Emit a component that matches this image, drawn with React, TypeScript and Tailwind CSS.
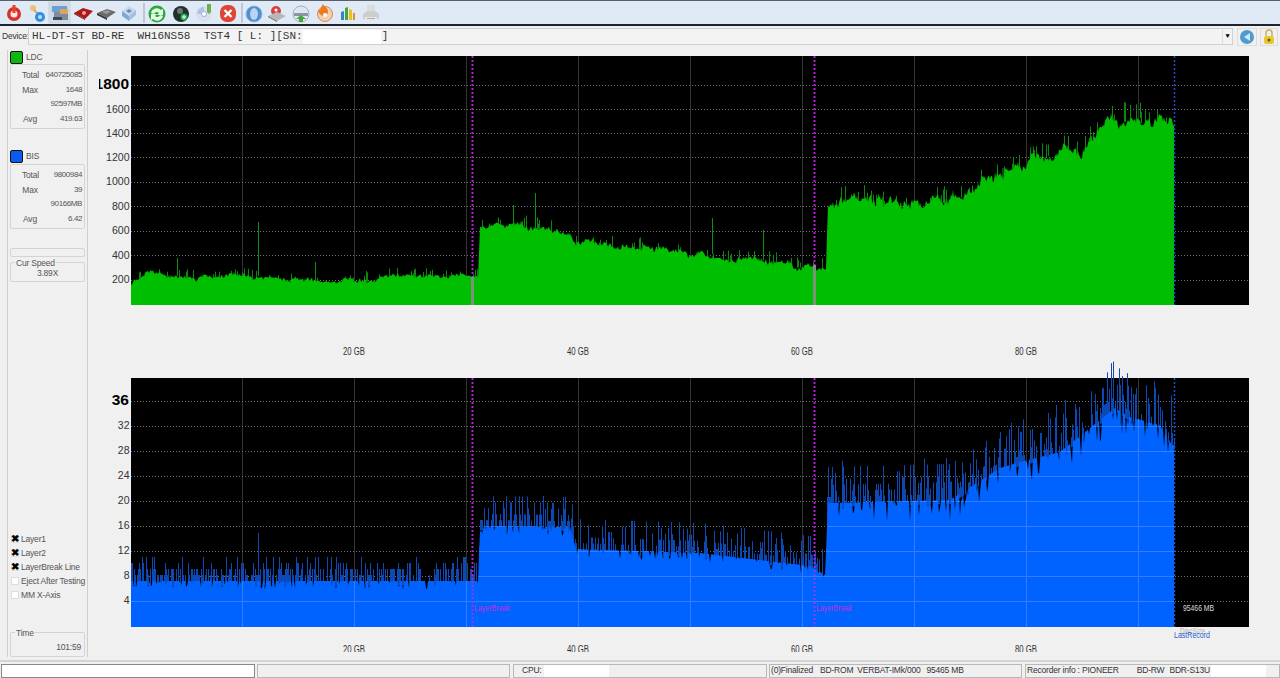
import React from "react";

function rng(seed: number) {
  let s = seed;
  return () => {
    s = (s * 1664525 + 1013904223) % 4294967296;
    return s / 4294967296;
  };
}
function interp(pts: number[][], x: number) {
  for (let i = 1; i < pts.length; i++) {
    if (x <= pts[i][0]) {
      const [a, b] = pts[i - 1];
      const [c, d] = pts[i];
      return b + ((d - b) * (x - a)) / (c - a || 1);
    }
  }
  return pts[pts.length - 1][1];
}

const LDC = [[131,284],[150,272],[170,277],[250,276],[300,280],[340,282],[400,275],[470,278],[478,277],[480,226],[530,224],[570,236],[575,244],[650,249],[700,256],[750,260],[812,266],[826,270],[828,206],[850,197],[900,207],[950,199],[1000,178],[1020,167],[1060,147],[1080,155],[1100,127],[1110,118],[1170,122],[1174,128]];
const BIS = [[131,581],[470,581],[478,581],[480,526],[570,527],[576,549],[700,553],[810,566],[825,575],[828,503],[950,500],[1000,468],[1020,462],[1060,452],[1085,432],[1100,420],[1115,408],[1130,417],[1160,425],[1172,445]];

function greenPath() {
  const r = rng(7);
  let low = 0;
  let d = "M131 305";
  for (let x = 131; x <= 1174; x++) {
    const amp = x < 478 ? 3 : x < 828 ? 4 : 7;
    low = 0.85 * low + (r() - 0.5) * amp * 0.9;
    d += `L${x} ${(interp(LDC, x) + low + (r() - 0.5) * amp).toFixed(1)}`;
  }
  return d + "L1174 305Z";
}
function greenSpikes() {
  const r = rng(3);
  let d = "";
  for (let x = 131; x <= 1174; x += 1) {
    if (r() < 0.16) {
      const y = interp(LDC, x);
      const len = (x < 478 ? 6 : x < 828 ? 9 : 15) * r();
      d += `M${x + 0.5} ${y + 3}V${(y - 2 - len).toFixed(1)}`;
    }
  }
  return d;
}
function bluePath() {
  const r = rng(11);
  let d = "M131 627";
  for (let x = 131; x <= 1174; x++) {
    const base = interp(BIS, x);
    const big = x >= 828 ? 22 : 9;
    const drop = r() < 0.22 ? r() * big : 0;
    d += `L${x} ${(base + drop).toFixed(1)}`;
  }
  return d + "L1174 627Z";
}
function blueSpikes() {
  const r = rng(5);
  let d = "";
  for (let x = 131; x <= 1174; x++) {
    if (r() < 0.58) {
      const y = interp(BIS, x);
      const maxLen = x < 478 ? 18 : x < 828 ? 26 : x < 1000 ? 34 : 40;
      const k = r();
      const len = Math.ceil((k * k * maxLen + 4) / 6) * 6;
      d += `M${x + 0.5} ${y + 4}V${(y - len).toFixed(1)}`;
    }
  }
  return d;
}

const FONT = "'Liberation Sans', sans-serif";

function Chart({ id, top, labels, series, fill, breakEnd, breakLow }: {
  id: string;
  top: number;
  labels: [string, number, number, boolean][];
  series: React.ReactNode;
  fill?: string;
  breakEnd: [number, number];
  breakLow?: string;
}) {
  const height = 249;
  const b = top + height;
  const vs = [242, 354, 466, 578, 690, 802, 914, 1026, 1138];
  return (
    <g fontFamily={FONT}>
      <defs>
        <clipPath id={id}><rect x={99} y={top - 4} width={60} height={40} /></clipPath>
        {fill && <clipPath id={`${id}f`}><path d={fill} /></clipPath>}
      </defs>
      <rect x={131} y={top} width={1118} height={height} fill="#000" />
      {vs.map((x) => (
        <path key={x} d={`M${x + 0.5} ${top}V${b}`} stroke="#333" strokeWidth={1} />
      ))}
      {labels.map(([t, y]) => (
        <path key={t} d={`M131 ${y + 0.5}H1249`} stroke="#6e6e6e" strokeWidth={1} strokeDasharray="1 2" />
      ))}
      {series}
      {fill && (
        <g clipPath={`url(#${id}f)`}>
          {vs.map((x) => (
            <path key={x} d={`M${x + 0.5} ${top}V${b}`} stroke="#2f7fff" strokeWidth={1} />
          ))}
          {labels.map(([t, y]) => (
            <path key={t} d={`M131 ${y + 0.5}H1174`} stroke="#2f7fff" strokeWidth={1} />
          ))}
        </g>
      )}
      {labels.map(([t, y, ty, bold]) =>
        bold ? (
          <text key={t} x={129} y={ty + 5} textAnchor="end" fontSize={15.5} fontWeight={700} fill="#000" clipPath={`url(#${id})`}>{t}</text>
        ) : (
          <text key={t} x={129.5} y={ty + 4} textAnchor="end" fontSize={11.5} textLength={t.length * 5.85} lengthAdjust="spacingAndGlyphs" fill="#333">{t}</text>
        )
      )}
      {[472, 814].map((x, i) => (
        <React.Fragment key={x}>
          <path d={`M${x + 0.5} ${top}V${breakEnd[i]}`} stroke="#b41fd0" strokeWidth={2} strokeDasharray="2 2" />
          <path d={`M${x + 0.5} ${breakEnd[i]}V${b}`} stroke={breakLow || "#7d917d"} strokeWidth={breakLow ? 2 : 3} strokeDasharray={breakLow ? "2 2" : undefined} />
        </React.Fragment>
      ))}
      <path d={`M1174.5 ${top}V${b}`} stroke="#1850d8" strokeWidth={1.5} strokeDasharray="2 2" />
    </g>
  );
}

function AxisLabels({ y }: { y: number }) {
  return (
    <g fontFamily={FONT} fontSize={10} fill="#333">
      {[["20 GB", 354], ["40 GB", 578], ["60 GB", 802], ["80 GB", 1026]].map(([t, x]) => (
        <text key={t as string} x={x as number} y={y} textAnchor="middle" textLength={22} lengthAdjust="spacingAndGlyphs">{t}</text>
      ))}
    </g>
  );
}

function Charts() {
  const green = greenPath();
  const blue = bluePath();
  return (
    <svg className="block" width={1192} height={610} viewBox="88 50 1192 610">
      <defs>
        <clipPath id="axisClip"><rect x={88} y={636} width={1192} height={16} /></clipPath>
      </defs>
      <Chart
        id="ldc"
        top={56}
        breakEnd={[277, 265]}
        labels={[["1800", 85, 84, true], ["1600", 109, 108.5, false], ["1400", 133, 133, false], ["1200", 157, 157, false], ["1000", 182, 181, false], ["800", 206, 206, false], ["600", 231, 230, false], ["400", 255, 255, false], ["200", 280, 279, false]]}
        series={
          <g>
            <path d={greenSpikes()} stroke="#0a8a0a" strokeWidth={1} />
            <path d={green} fill="#00bf00" />
            <path d="M258.5 276V222M177.5 276V258M315.5 280V262M535.5 226V193M712.5 254V218M763.5 260V230M513.5 226V205M1112.5 120V106M1140.5 118V103M1068.5 150V136M1003 180V168" stroke="#0f8f0f" strokeWidth={1} />
          </g>
        }
      />
      <AxisLabels y={355} />
      <Chart
        id="bis"
        top={378}
        fill={blue}
        breakEnd={[581, 566]}
        breakLow="#8a3ff0"
        labels={[["36", 401, 400, true], ["32", 426, 424.5, false], ["28", 451, 450, false], ["24", 476, 475, false], ["20", 501, 500, false], ["16", 526, 525, false], ["12", 551, 550, false], ["8", 576, 575, false], ["4", 601, 600, false]]}
        series={
          <g>
            <path d={blueSpikes()} stroke="#0c49b4" strokeWidth={1} />
            <path d={blue} fill="#0062ff" />
            <path d="M258.5 575V533M543.5 527V496M1120.5 425V385M1066.5 455V418M1136.5 420V388" stroke="#0c49b4" strokeWidth={1} />
          </g>
        }
      />
      <g fontFamily={FONT} fontSize={9}>
        <text x={474} y={611} fill="#c030e0" textLength={36} lengthAdjust="spacingAndGlyphs">LayerBreak</text>
        <text x={816} y={611} fill="#c030e0" textLength={36} lengthAdjust="spacingAndGlyphs">LayerBreak</text>
        <text x={1183} y={611} fill="#ddd" textLength={31} lengthAdjust="spacingAndGlyphs">95466 MB</text>
        <text x={1180} y={634} fill="#b5b5b5" textLength={25} lengthAdjust="spacingAndGlyphs">DiscSize</text>
        <text x={1174} y={638} fill="#2a5fd0" textLength={36} lengthAdjust="spacingAndGlyphs">LastRecord</text>
      </g>
      <g clipPath="url(#axisClip)">
        <AxisLabels y={653} />
      </g>
    </svg>
  );
}

function Disc({ c }: { c: string }) {
  return <span className={`h-[13px] w-[13px] rounded-[2px] border border-[#111] ${c}`} />;
}

function StatBox({ rows }: { rows: [string, string][] }) {
  return (
    <div className="h-[65px] w-[75px] rounded-[2px] border border-[#d4d4d4] pb-[3px] pl-[11px] pr-[2px] pt-[3px]">
      {rows.map(([l, v], i) => (
        <div key={i} className="flex h-[14.6px] items-center justify-between">
          <span className="w-[16px] text-center">{l}</span>
          <span className="text-[8px] tracking-[-0.4px]">{v}</span>
        </div>
      ))}
    </div>
  );
}

function Check({ on, label }: { on: boolean; label: string }) {
  return (
    <div className="flex h-[14px] items-center gap-[2px] whitespace-nowrap pl-[1px]">
      <span className="flex h-[8px] w-[8px] items-center justify-center border border-[#dcdcdc] bg-white text-[10px] font-bold leading-none text-black">
        {on ? "✖" : ""}
      </span>
      <span>{label}</span>
    </div>
  );
}

const icons: React.ReactNode[] = [
  <g key="p"><circle cx="10" cy="11" r="7" fill="#d9302a" /><circle cx="10" cy="11" r="3.5" fill="#fbe8e0" /><rect x="8.5" y="2" width="3" height="8" fill="#e8402a" /></g>,
  <g key="k"><circle cx="6" cy="5" r="3" fill="#e9c07a" /><path d="M7 7l5 5" stroke="#d8a850" strokeWidth="2" /><circle cx="13" cy="14" r="5" fill="#2f8fe0" /><circle cx="13" cy="14" r="2" fill="#bfe0f8" /></g>,
  <g key="d"><rect x="2" y="3" width="15" height="6" fill="#6f9fd0" /><rect x="4" y="9" width="14" height="8" fill="#7c8c9c" /><rect x="10" y="6" width="8" height="5" fill="#d8a860" /><rect x="3" y="14" width="9" height="3" fill="#3a4a5a" /></g>,
  <g key="r"><path d="M1 10l9-5 10 3-8 8z" fill="#b01818" /><path d="M1 10l11 6v1L1 11z" fill="#701010" /><circle cx="11" cy="10" r="2" fill="#e8a0a0" /></g>,
  <g key="b"><path d="M1 10l10-4 9 3-9 6z" fill="#6a6a6a" /><path d="M1 10l10 5v2L1 12z" fill="#333" /><path d="M6 9l5-2 4 2-5 2z" fill="#9a9a9a" /></g>,
  <g key="s"><path d="M3 8l7-5 7 4-7 6z" fill="#c8d8ea" /><path d="M3 8l7 5v5l-7-5z" fill="#7fa8d0" /><path d="M17 7l-7 6v5l7-6z" fill="#a4c0dc" /><path d="M7 8l3-2 3 2-3 2z" fill="#5f90c8" /></g>,
  <g key="g"><circle cx="10" cy="11" r="8.5" fill="#2aa83a" /><path d="M4 10a6 6 0 0 1 10-3l2-1v6h-6l2-2a3 3 0 0 0-5 1zM16 13a6 6 0 0 1-10 3l-2 1v-6h6l-2 2a3 3 0 0 0 5-1z" fill="#e6ffe6" /></g>,
  <g key="bl"><circle cx="10" cy="11" r="8" fill="#20302a" /><circle cx="9" cy="8" r="3" fill="#6a7a72" /><circle cx="13" cy="14" r="3.5" fill="#28b050" /><path d="M11 14h4M13 12v4" stroke="#fff" strokeWidth="1" /></g>,
  <g key="c"><circle cx="10" cy="11" r="8" fill="#d8dff0" /><circle cx="10" cy="11" r="2.5" fill="#fff" stroke="#a0b0d0" /><path d="M3 11a7 7 0 0 1 7-7v4a3 3 0 0 0-3 3z" fill="#b0c0e8" /><path d="M13 1h4v8l-2 2-2-2z" fill="#6cb04a" /></g>,
  <g key="x"><rect x="2" y="2" width="16" height="17" rx="7" fill="#e04434" /><path d="M6.5 7l7 7M13.5 7l-7 7" stroke="#fff" strokeWidth="2.4" /></g>,
  <g key="o"><circle cx="10" cy="11" r="8" fill="#4f8fd0" /><ellipse cx="10" cy="11" rx="4" ry="6" fill="#b8d4f0" /><circle cx="10" cy="11" r="8" fill="none" stroke="#8fb8e0" /></g>,
  <g key="u"><ellipse cx="9" cy="8" rx="5" ry="5" fill="#d84040" /><circle cx="9" cy="7" r="1.5" fill="#fff" /><path d="M1 13l9-4 9 4-9 5z" fill="#b8b8b8" /><path d="M1 13l9 5v1l-9-5z" fill="#666" /></g>,
  <g key="dn"><circle cx="10" cy="11" r="8" fill="#dfe6f0" stroke="#a0b0c4" /><rect x="3" y="10" width="14" height="3" fill="#8a96a4" /><path d="M10 12l5 4h-3v3H8v-3H5z" fill="#3fa83f" /></g>,
  <g key="f"><circle cx="11" cy="11" r="7.5" fill="#f0d0b0" stroke="#d88a50" /><path d="M4 8c3-1 3-4 5-7 1 3 5 3 5 8-1 5-7 6-10-1z" fill="#ee7a20" /><circle cx="11" cy="12" r="2" fill="#fff" /></g>,
  <g key="ch"><path d="M4 9l3-1v9H4z" fill="#3a7fd0" /><path d="M8 5l3-1v13H8z" fill="#3fa83f" /><path d="M12 6l3 1v10h-3z" fill="#e8c020" /><rect x="16" y="10" width="2" height="7" fill="#e09020" /></g>,
  <g key="pr" opacity="0.65"><rect x="6" y="2" width="8" height="6" fill="#d8d8d0" /><path d="M2 11l4-3h8l4 3v5H2z" fill="#c0c0b8" /><rect x="4" y="14" width="12" height="4" fill="#e8e8e0" /><rect x="6" y="15" width="8" height="1" fill="#909088" /></g>,
];

function Toolbar() {
  const groups = [icons.slice(0, 6), icons.slice(6, 10), icons.slice(10)];
  const gapW = ["w-[23px]", "w-[23.5px]", "w-[23.3px]"];
  const sep = ["", "ml-[2.5px] mr-[1px]", "ml-[1px]"];
  return (
    <div className="flex h-[24px] items-center border-t border-[#55606c] bg-[#e0e9f6] pl-[2px]">
      {groups.map((g, i) => (
        <React.Fragment key={i}>
          {i > 0 && <span className={`h-[20px] w-[2px] bg-[#bcc8d6] ${sep[i]}`} />}
          {g.map((ic, j) => (
            <span
              key={j}
              className={`flex h-[23px] ${gapW[i]} items-center justify-center ${i === 0 && j === 2 ? "border border-[#d6dee8] bg-[#cfd9e5]" : ""}`}
            >
              <svg width="20" height="20" viewBox="0 0 20 20">{ic}</svg>
            </span>
          ))}
        </React.Fragment>
      ))}
    </div>
  );
}

function DeviceBar() {
  return (
    <div className="flex h-[24px] items-start bg-[#f0f0f0] pl-[2px] pr-[2px] pt-[2px] text-[8.5px] tracking-[-0.2px] text-[#333]">
      <span className="flex h-[17px] w-[26px] items-center whitespace-nowrap">Device:</span>
      <div className="flex h-[17px] flex-1 items-center border border-[#d0d0d0] bg-[#f3f3f3] pl-[3px] font-['Liberation_Mono',monospace] text-[11px] leading-none tracking-normal text-[#333]">
        <span className="whitespace-pre">HL-DT-ST BD-RE  WH16NS58  TST4 [ L: ][SN:</span>
        <span className="h-[14px] w-[78px] bg-white" />
        <span className="pl-[1px]">]</span>
        <span className="ml-auto flex h-[15px] w-[10px] items-center justify-center border-l border-[#ddd] text-[7px] text-black">▼</span>
      </div>
      <span className="ml-[4px] flex h-[18px] w-[20px] items-center justify-center border border-[#ddd]">
        <svg width="16" height="16" viewBox="0 0 16 16"><circle cx="8" cy="8" r="7" fill="#4f9ad0" /><path d="M11 4v8L5 8z" fill="#cfe8f8" /></svg>
      </span>
      <span className="ml-[3px] flex h-[18px] w-[18px] items-center justify-center border border-[#ddd]">
        <svg width="14" height="16" viewBox="0 0 14 16"><path d="M4 7V4a3 3 0 0 1 6 0v3" fill="none" stroke="#c8b060" strokeWidth="1.5" /><rect x="2" y="7" width="10" height="8" rx="2" fill="#e8c830" /><circle cx="7" cy="11" r="1.5" fill="#705010" /></svg>
      </span>
    </div>
  );
}

function Sidebar() {
  return (
    <div className="ml-[7px] flex h-[607px] w-[81px] shrink-0 flex-col border-x border-[#cfcfcf] bg-[#f0f0f0] pl-[2px] text-[8.5px] tracking-[-0.2px] text-[#555]">
      <div className="flex h-[14px] items-center gap-[3px]"><Disc c="bg-[#0cb80c]" /><span>LDC</span></div>
      <StatBox rows={[["Total", "640725085"], ["Max", "1648"], ["", "92597MB"], ["Avg", "419.63"]]} />
      <div className="mt-[20px] flex h-[14px] items-center gap-[3px]"><Disc c="bg-[#0a5cf0]" /><span>BIS</span></div>
      <div className="mt-[1px]">
        <StatBox rows={[["Total", "9800984"], ["Max", "39"], ["", "90166MB"], ["Avg", "6.42"]]} />
      </div>
      <div className="mt-[19px] h-[9px] w-[75px] rounded-[2px] border border-[#d4d4d4]" />
      <div className="relative mt-[5px] flex h-[20px] w-[75px] items-end justify-center rounded-[2px] border border-[#d4d4d4] pb-[1px]">
        <span className="absolute -top-[6px] left-[4px] bg-[#f0f0f0] px-[1px]">Cur Speed</span>
        <span>3.89X</span>
      </div>
      <div className="mt-[250px] flex flex-col">
        <Check on label="Layer1" />
        <Check on label="Layer2" />
        <Check on label="LayerBreak Line" />
        <Check on={false} label="Eject After Testing" />
        <Check on={false} label="MM X-Axis" />
      </div>
      <div className="relative mt-[30px] flex h-[25px] w-[75px] items-end justify-end rounded-[2px] border border-[#d4d4d4] pb-[2px] pr-[3px]">
        <span className="absolute -top-[6px] left-[4px] bg-[#f0f0f0] px-[1px]">Time</span>
        <span>101:59</span>
      </div>
    </div>
  );
}

function StatusBar() {
  const cell = "flex h-[14px] items-center border border-[#b8b8b8] text-[8.5px] tracking-[-0.2px] text-[#333] whitespace-pre";
  return (
    <div className="flex h-[18px] items-center border-t-2 border-[#d4d4d4] bg-[#f0f0f0] pl-[1px] pt-[1px]">
      <div className="h-[14px] w-[254px] border border-[#888] bg-white" />
      <div className={`${cell} ml-[2px] w-[253px]`} />
      <div className={`${cell} ml-[3px] w-[254px] pl-[8px]`}>CPU:<span className="ml-[2px] h-[12px] w-[65px] bg-white" /></div>
      <div className={`${cell} ml-[2px] w-[253px] pl-[1px]`}>(0)Finalized<span className="ml-[7px]">BD-ROM</span><span className="ml-[4px]">VERBAT-IMk/000</span><span className="ml-[6px]">95465 MB</span></div>
      <div className={`${cell} ml-[3px] flex-1 pl-[1px]`}>Recorder info : PIONEER<span className="ml-[18px]">BD-RW</span><span className="ml-[5px]">BDR-S13U</span><span className="ml-[1px] h-[12px] w-[55px] bg-white" /></div>
    </div>
  );
}

export default function App() {
  return (
    <div className="h-[678px] w-[1280px] overflow-hidden bg-[#f0f0f0] font-['Liberation_Sans',sans-serif]">
      <Toolbar />
      <div className="h-[2px] bg-[#1c2430]" />
      <DeviceBar />
      <div className="flex h-[610px]">
        <Sidebar />
        <Charts />
      </div>
      <StatusBar />
    </div>
  );
}
